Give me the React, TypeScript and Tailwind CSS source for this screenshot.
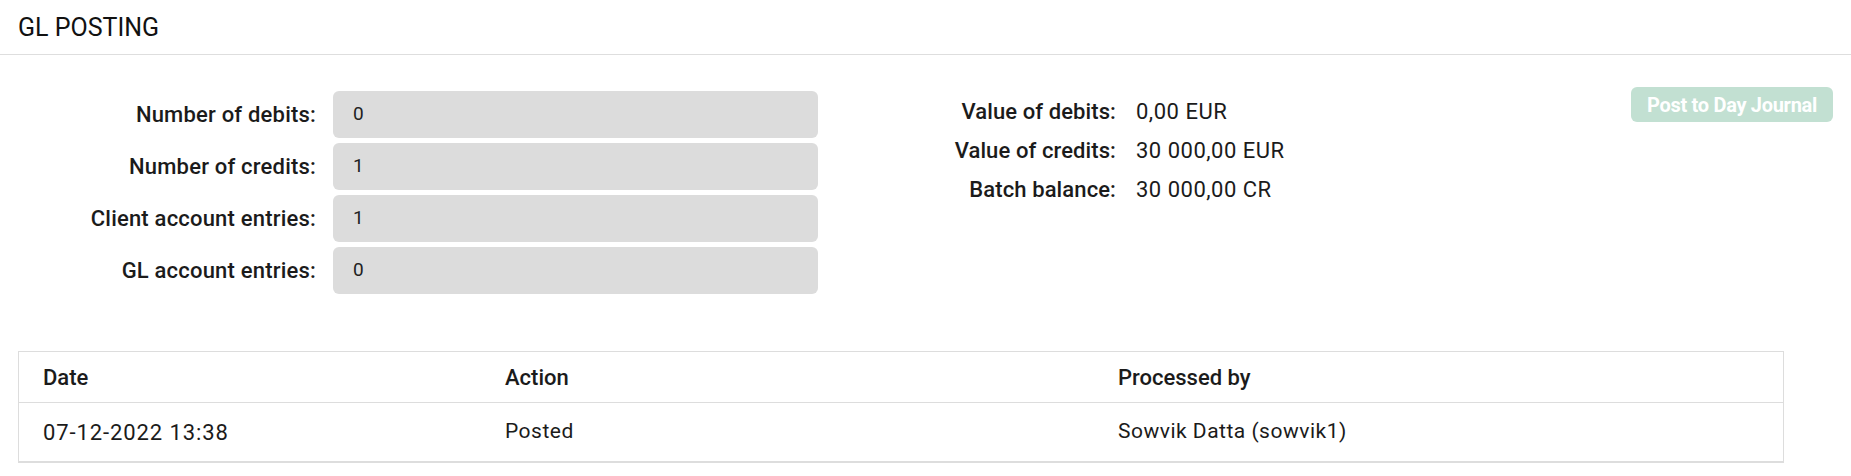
import React from "react";

const font = { fontFamily: 'Roboto, "Liberation Sans", sans-serif' };

function FieldRow({ label, value }: { label: string; value: string }) {
  return (
    <div className="flex items-center h-[47px]">
      <div className="w-[316px] text-right text-[22px] font-medium tracking-[0.2px] text-[#1b1b1b] whitespace-nowrap">{label}</div>
      <div className="ml-[17px] w-[485px] h-[47px] rounded-[6px] bg-[#dcdcdc] flex items-center pl-[20px] text-[19px] text-[#222]">
        {value}
      </div>
    </div>
  );
}

function ValueRow({ label, value }: { label: string; value: string }) {
  return (
    <div className="flex items-center h-[39px]">
      <div className="w-[200px] text-right text-[22px] font-medium tracking-[0.1px] text-[#1b1b1b] whitespace-nowrap">{label}</div>
      <div className="ml-[20px] text-[22px] tracking-[0.5px] text-[#1b1b1b] whitespace-nowrap">{value}</div>
    </div>
  );
}

export default function App() {
  return (
    <div className="w-[1851px] h-[476px] bg-white overflow-hidden" style={font}>
      <div className="h-[55px] border-b border-[#dedede] flex items-center pl-[18px]">
        <span className="text-[25px] text-[#111] mt-[2px]">GL POSTING</span>
      </div>

      <div className="flex items-start pt-[32px]">
        <div className="flex flex-col gap-[5px] mt-[4px]">
          <FieldRow label="Number of debits:" value="0" />
          <FieldRow label="Number of credits:" value="1" />
          <FieldRow label="Client account entries:" value="1" />
          <FieldRow label="GL account entries:" value="0" />
        </div>

        <div className="flex flex-col ml-[98px] mt-[5px]">
          <ValueRow label="Value of debits:" value="0,00 EUR" />
          <ValueRow label="Value of credits:" value="30 000,00 EUR" />
          <ValueRow label="Batch balance:" value="30 000,00 CR" />
        </div>

        <button className="ml-auto mr-[18px] w-[202px] h-[35px] rounded-[6px] bg-[#c2e0d2] text-white text-[20px] font-bold tracking-[-0.3px]">
          Post to Day Journal
        </button>
      </div>

      <div className="mt-[57px] ml-[18px] w-[1766px] border border-[#dddddd] border-b-2">
        <div className="flex h-[51px] items-center border-b border-[#dddddd] text-[22px] font-medium text-[#1b1b1b]">
          <div className="w-[463px] pl-[24px]">Date</div>
          <div className="w-[613px] pl-[23px]">Action</div>
          <div className="flex-1 pl-[23px]">Processed by</div>
        </div>
        <div className="flex h-[58px] items-center text-[21px] tracking-[0.5px] text-[#1b1b1b]">
          <div className="w-[463px] pl-[24px] text-[22px] tracking-[0.9px]">07-12-2022 13:38</div>
          <div className="w-[613px] pl-[23px]">Posted</div>
          <div className="flex-1 pl-[23px]">Sowvik Datta (sowvik1)</div>
        </div>
      </div>
    </div>
  );
}
